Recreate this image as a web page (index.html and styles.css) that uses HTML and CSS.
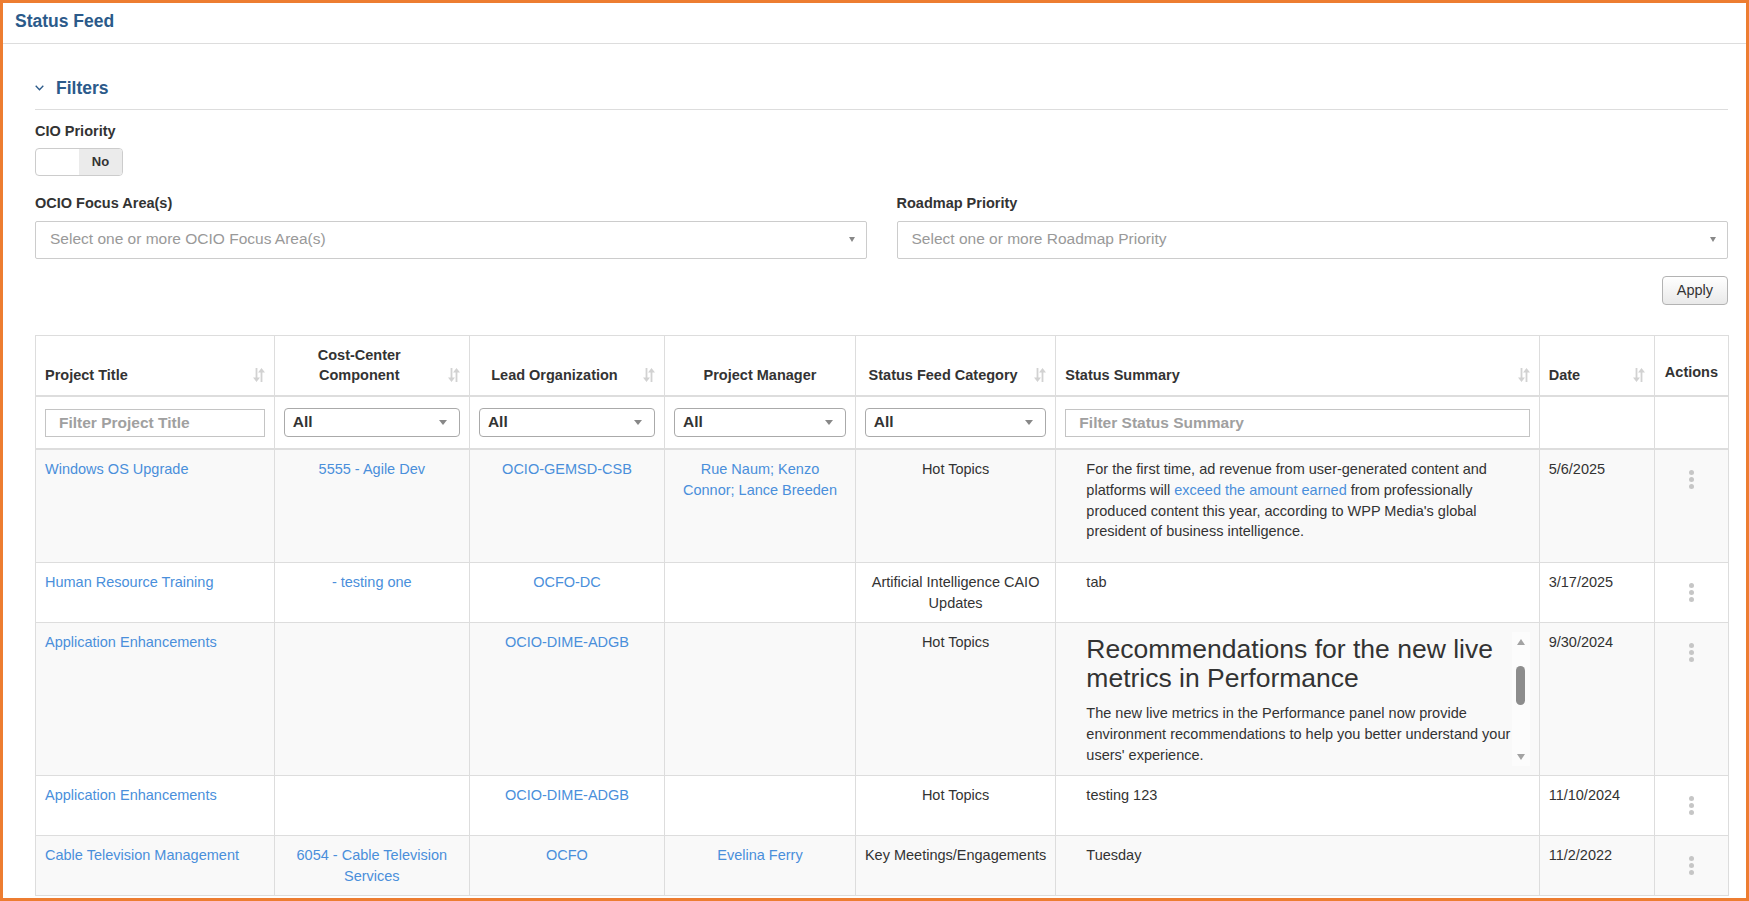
FILE: index.html
```html
<!DOCTYPE html>
<html lang="en">
<head>
  <meta charset="UTF-8">
  <meta name="viewport" content="width=device-width, initial-scale=1.0">
  <title>Status Feed</title>
  <link rel="stylesheet" href="styles.css">
</head>
<body>
  <svg class="defs" aria-hidden="true">
    <symbol id="sort-both" viewBox="0 0 12 16">
      <path d="M2.6 1h1.8v9.5H7L3.5 15 0 10.5h2.6z"/>
      <path d="M7.6 15h1.8V5.5H12L8.5 1 5 5.5h2.6z"/>
    </symbol>
  </svg>

  <div class="frame">
    <div class="panel-heading">
      <h2>Status Feed</h2>
    </div>

    <div class="panel-body">
      <div class="filters-head">
        <svg class="chevron" width="9" height="6" viewBox="0 0 9 6"><polyline points="0.7,0.8 4.5,4.8 8.3,0.8"/></svg>
        <span>Filters</span>
      </div>

      <div class="field cio">
        <label>CIO Priority</label>
        <div class="toggle">
          <span class="toggle-on"></span>
          <span class="toggle-off">No</span>
        </div>
      </div>

      <div class="selects">
        <div class="field">
          <label>OCIO Focus Area(s)</label>
          <div class="multi"><span>Select one or more OCIO Focus Area(s)</span><span class="caret"></span></div>
        </div>
        <div class="field">
          <label>Roadmap Priority</label>
          <div class="multi"><span>Select one or more Roadmap Priority</span><span class="caret"></span></div>
        </div>
      </div>

      <div class="apply-row">
        <button class="btn-apply">Apply</button>
      </div>

      <table class="feed">
        <colgroup>
          <col class="c-title"><col class="c-cost"><col class="c-org"><col class="c-pm">
          <col class="c-cat"><col class="c-sum"><col class="c-date"><col class="c-act">
        </colgroup>
        <thead>
          <tr class="head">
            <th class="sortable l">Project Title<svg class="sort"><use href="#sort-both"/></svg></th>
            <th class="sortable">Cost-Center Component<svg class="sort"><use href="#sort-both"/></svg></th>
            <th class="sortable">Lead Organization<svg class="sort"><use href="#sort-both"/></svg></th>
            <th>Project Manager</th>
            <th class="sortable">Status Feed Category<svg class="sort"><use href="#sort-both"/></svg></th>
            <th class="sortable l">Status Summary<svg class="sort"><use href="#sort-both"/></svg></th>
            <th class="sortable l">Date<svg class="sort"><use href="#sort-both"/></svg></th>
            <th class="act-head">Actions</th>
          </tr>
          <tr class="filter-row">
            <td><input class="filter-input" placeholder="Filter Project Title"></td>
            <td><div class="pick"><span>All</span><span class="caret"></span></div></td>
            <td><div class="pick"><span>All</span><span class="caret"></span></div></td>
            <td><div class="pick"><span>All</span><span class="caret"></span></div></td>
            <td><div class="pick"><span>All</span><span class="caret"></span></div></td>
            <td><input class="filter-input" placeholder="Filter Status Summary"></td>
            <td></td>
            <td></td>
          </tr>
        </thead>
        <tbody>
          <tr>
            <td class="l"><a href="#">Windows OS Upgrade</a></td>
            <td><a href="#">5555 - Agile Dev</a></td>
            <td><a href="#">OCIO-GEMSD-CSB</a></td>
            <td><a href="#">Rue Naum; Kenzo Connor; Lance Breeden</a></td>
            <td>Hot Topics</td>
            <td class="l">
              <div class="summary">
                <p>For the first time, ad revenue from user-generated content and platforms will <a href="#">exceed the amount earned</a> from professionally produced content this year, according to WPP Media's global president of business intelligence.</p>
              </div>
            </td>
            <td class="l">5/6/2025</td>
            <td><span class="kebab"><i></i><i></i><i></i></span></td>
          </tr>
          <tr>
            <td class="l"><a href="#">Human Resource Training</a></td>
            <td><a href="#">- testing one</a></td>
            <td><a href="#">OCFO-DC</a></td>
            <td></td>
            <td>Artificial Intelligence CAIO Updates</td>
            <td class="l"><div class="summary"><p>tab</p></div></td>
            <td class="l">3/17/2025</td>
            <td><span class="kebab"><i></i><i></i><i></i></span></td>
          </tr>
          <tr>
            <td class="l"><a href="#">Application Enhancements</a></td>
            <td></td>
            <td><a href="#">OCIO-DIME-ADGB</a></td>
            <td></td>
            <td>Hot Topics</td>
            <td class="l">
              <div class="summary">
                <div class="scrollbox">
                  <div class="scroll-content">
                    <h3>Recommendations for the new live metrics in Performance</h3>
                    <p>The new live metrics in the Performance panel now provide environment recommendations to help you better understand your users' experience.</p>
                  </div>
                  <div class="scrollbar">
                    <span class="sb-btn sb-up"></span>
                    <span class="sb-track"><span class="sb-thumb"></span></span>
                    <span class="sb-btn sb-down"></span>
                  </div>
                </div>
              </div>
            </td>
            <td class="l">9/30/2024</td>
            <td><span class="kebab"><i></i><i></i><i></i></span></td>
          </tr>
          <tr>
            <td class="l"><a href="#">Application Enhancements</a></td>
            <td></td>
            <td><a href="#">OCIO-DIME-ADGB</a></td>
            <td></td>
            <td>Hot Topics</td>
            <td class="l"><div class="summary"><p>testing 123</p></div></td>
            <td class="l">11/10/2024</td>
            <td><span class="kebab"><i></i><i></i><i></i></span></td>
          </tr>
          <tr>
            <td class="l"><a href="#">Cable Television Management</a></td>
            <td><a href="#">6054 - Cable Television Services</a></td>
            <td><a href="#">OCFO</a></td>
            <td><a href="#">Evelina Ferry</a></td>
            <td>Key Meetings/Engagements</td>
            <td class="l"><div class="summary"><p>Tuesday</p></div></td>
            <td class="l">11/2/2022</td>
            <td><span class="kebab"><i></i><i></i><i></i></span></td>
          </tr>
        </tbody>
      </table>
    </div>
  </div>
</body>
</html>
```

FILE: styles.css
```css
* {
  box-sizing: border-box;
}
html, body {
  margin: 0;
  padding: 0;
  background: #fff;
  color: #333;
  font-family: "Liberation Sans", Arial, sans-serif;
  font-size: 14.5px;
  line-height: 20.8px;
}
a {
  color: #4a8fdb;
  text-decoration: none;
}
.defs {
  display: none;
}
.frame {
  height: 901px;
  border: 3px solid #ed7d31;
  overflow: hidden;
}
.panel-heading {
  padding: 8px 12px 11px;
  border-bottom: 1px solid #ddd;
}
.panel-heading h2 {
  margin: 0;
  font-size: 17.5px;
  line-height: 21px;
  font-weight: bold;
  color: #2b5a8a;
}
.panel-body {
  padding: 32px 18px 0 32px;
}
.filters-head {
  display: flex;
  align-items: center;
  gap: 12px;
  padding-bottom: 9px;
  border-bottom: 1px solid #ddd;
  color: #2b5a8a;
  font-size: 17.5px;
  font-weight: bold;
  line-height: 24px;
}
.chevron polyline {
  fill: none;
  stroke: #2b5a8a;
  stroke-width: 1.3;
}
.field label {
  display: block;
  font-weight: bold;
  line-height: 21px;
  margin-bottom: 7px;
}
.cio {
  margin-top: 11px;
}
.cio label {
  margin-bottom: 6px;
}
.toggle {
  display: flex;
  width: 88px;
  height: 28px;
  border: 1px solid #ccc;
  border-radius: 4px;
  overflow: hidden;
}
.toggle span {
  flex: 1;
}
.toggle-off {
  display: flex;
  align-items: center;
  justify-content: center;
  background: #ebebeb;
  font-size: 13px;
  font-weight: bold;
  color: #333;
}
.selects {
  display: grid;
  grid-template-columns: 1fr 1fr;
  gap: 30px;
  margin-top: 17px;
}
.multi {
  display: flex;
  align-items: center;
  justify-content: space-between;
  height: 37.5px;
  padding: 0 11px 0 14px;
  border: 1px solid #ccc;
  border-radius: 2px;
  color: #999;
  font-size: 15.5px;
}
.caret {
  border-left: 3.5px solid transparent;
  border-right: 3.5px solid transparent;
  border-top: 5px solid #888;
}
.apply-row {
  display: flex;
  justify-content: flex-end;
  margin-top: 17px;
}
.btn-apply {
  height: 29px;
  padding: 0 14px;
  font: inherit;
  color: #333;
  background: linear-gradient(#fff, #e9e9e9);
  border: 1px solid #b3b3b3;
  border-radius: 4px;
}

/* table */
.feed {
  width: 100%;
  margin-top: 30px;
  border-collapse: collapse;
  table-layout: fixed;
}
.c-title { width: 238.7px; }
.c-cost { width: 195.2px; }
.c-org { width: 195.2px; }
.c-pm { width: 190.8px; }
.c-cat { width: 200.5px; }
.c-sum { width: 483.3px; }
.c-date { width: 114.9px; }
.c-act { width: 74.8px; }

.feed th,
.feed td {
  border: 1px solid #ddd;
  padding: 9px;
  text-align: center;
  vertical-align: top;
}
.feed .l {
  text-align: left;
}
.feed th {
  position: relative;
  vertical-align: bottom;
  font-weight: bold;
  border-bottom: 2px solid #ddd;
}
.feed th.sortable {
  padding-right: 34px;
}
.feed th.act-head {
  padding-bottom: 12px;
}
.sort {
  position: absolute;
  right: 9px;
  bottom: 12px;
  width: 12px;
  height: 16px;
  fill: #d2d2d2;
}
.filter-row td {
  padding: 11px 9px;
  border-bottom: 2px solid #ddd;
  vertical-align: middle;
}
.filter-input {
  display: block;
  width: 100%;
  height: 28px;
  padding: 0 13px;
  border: 1px solid #c4c4c4;
  font: inherit;
  font-size: 15.5px;
  font-weight: bold;
  color: #333;
}
.filter-input::placeholder {
  color: #a0a0a0;
}
.pick {
  display: flex;
  align-items: center;
  justify-content: space-between;
  height: 29px;
  padding: 0 12px 0 8px;
  border: 1px solid #aaa;
  border-radius: 4px;
  background: #fff;
  font-size: 15.5px;
  font-weight: bold;
  color: #333;
}
.pick .caret {
  border-left-width: 4px;
  border-right-width: 4px;
}
.feed tbody tr:nth-child(odd) {
  background: #f9f9f9;
}
.summary {
  padding-left: 21px;
}
.summary p {
  margin: 0 18px 10.5px 0;
}
.scrollbox {
  display: flex;
  height: 133.5px;
}
.scroll-content {
  flex: 1;
}
.scroll-content h3 {
  margin: 3px 0 10px;
  font-size: 26.5px;
  line-height: 29px;
  font-weight: normal;
  color: #333;
}
.scroll-content p {
  margin: 0;
}
.scrollbar {
  width: 18px;
  display: flex;
  flex-direction: column;
  align-items: center;
  background: #fcfcfc;
}
.sb-btn {
  height: 17px;
  display: flex;
  align-items: center;
  justify-content: center;
}
.sb-up::before,
.sb-down::before {
  content: "";
  border-left: 4.5px solid transparent;
  border-right: 4.5px solid transparent;
}
.sb-up::before {
  border-bottom: 6px solid #a3a3a3;
  margin-top: 3px;
}
.sb-down::before {
  border-top: 6px solid #a3a3a3;
}
.sb-track {
  flex: 1;
  padding-top: 17px;
}
.sb-thumb {
  display: block;
  width: 9.5px;
  height: 39px;
  border-radius: 5px;
  background: #8d8d8d;
}
.kebab {
  display: inline-flex;
  flex-direction: column;
  justify-content: center;
  gap: 2px;
  height: 41px;
}
.kebab i {
  width: 5px;
  height: 5px;
  border-radius: 50%;
  background: #c6c6c6;
}
```
